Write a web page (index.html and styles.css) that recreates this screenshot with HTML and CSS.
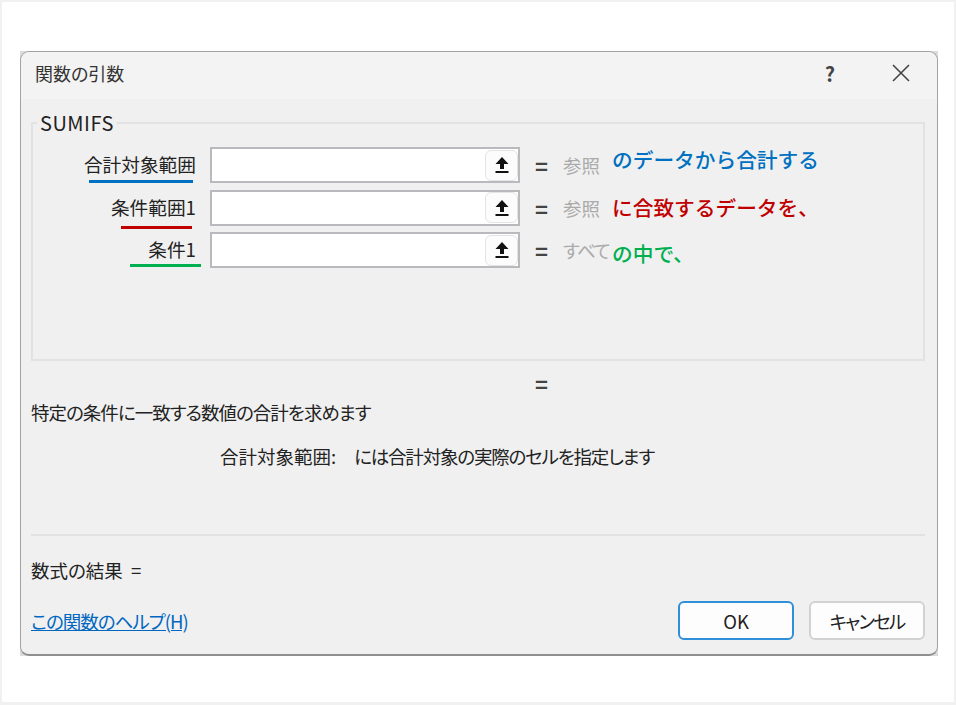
FILE: index.html
```html
<!DOCTYPE html>
<html lang="ja">
<head>
  <meta charset="UTF-8" />
  <title>関数の引数</title>
  <link rel="stylesheet" href="styles.css">
</head>
<body>
  <div class="page">
    <div class="dialog-back">
    <div class="dialog">
      <div class="titlebar">
        <div class="title">関数の引数</div>
        <div class="help">?</div>
        <svg class="close" width="18" height="18" viewBox="0 0 18 18"><path d="M1 1L17 17M17 1L1 17" /></svg>
      </div>
      <div class="content">
        <fieldset class="group">
          <legend>SUMIFS</legend>
          <div class="row">
            <div class="label">合計対象範囲</div>
            <div class="field">
              <div class="ref-btn"><svg width="16" height="18" viewBox="0 0 16 18"><path d="M8 1L14.5 8H10V13H6V8H1.5Z" /><rect x="1.5" y="15" width="13" height="2" /></svg></div>
              <span class="mark mark-blue"></span>
            </div>
            <div class="equals">=</div>
            <div class="hint">参照</div>
            <div class="note note-blue">のデータから合計する</div>
          </div>
          <div class="row">
            <div class="label">条件範囲1</div>
            <div class="field">
              <div class="ref-btn"><svg width="16" height="18" viewBox="0 0 16 18"><path d="M8 1L14.5 8H10V13H6V8H1.5Z" /><rect x="1.5" y="15" width="13" height="2" /></svg></div>
              <span class="mark mark-red"></span>
            </div>
            <div class="equals">=</div>
            <div class="hint">参照</div>
            <div class="note note-red">に合致するデータを、</div>
          </div>
          <div class="row">
            <div class="label">条件1</div>
            <div class="field">
              <div class="ref-btn"><svg width="16" height="18" viewBox="0 0 16 18"><path d="M8 1L14.5 8H10V13H6V8H1.5Z" /><rect x="1.5" y="15" width="13" height="2" /></svg></div>
              <span class="mark mark-green"></span>
            </div>
            <div class="equals">=</div>
            <div class="hint hint-all">すべて</div>
            <div class="note note-green">の中で、</div>
          </div>
        </fieldset>
        <div class="result-eq">=</div>
        <div class="desc">特定の条件に一致する数値の合計を求めます</div>
        <div class="arg-desc"><span class="arg-name">合計対象範囲:</span><span class="arg-text">には合計対象の実際のセルを指定します</span></div>
        <div class="divider"></div>
        <div class="formula">数式の結果&nbsp;&nbsp;=</div>
        <div class="footer">
          <a class="help-link" href="#">この関数のヘルプ(H)</a>
          <div class="buttons">
            <button class="btn btn-ok">OK</button>
            <button class="btn btn-cancel">キャンセル</button>
          </div>
        </div>
      </div>
    </div>
    </div>
  </div>
</body>
</html>
```

FILE: styles.css
```css
* {
  box-sizing: border-box;
  font-family: "Noto Sans CJK JP", "Noto Sans", sans-serif;
  font-feature-settings: "palt";
}
html, body {
  margin: 0;
  padding: 0;
  background: #fff;
}
.page {
  width: 956px;
  height: 705px;
  padding: 49px 16px 0 18px;
  border-left: 2px solid #f1f1f1;
  border-right: 2px solid #f1f1f1;
  border-top: 2px solid #f1f1f1;
  border-bottom: 3px solid #f1f1f1;
  overflow: hidden;
}
.dialog-back {
  width: 918px;
  height: 605px;
  background: #dcdcdc;
}
.dialog {
  height: 605px;
  background: #f0f0f0;
  border: 1px solid #a2a2a2;
  border-bottom: 2px solid #8f8f8f;
  border-radius: 9px;
  color: #222;
}
.titlebar {
  height: 47px;
  display: flex;
  align-items: center;
  padding: 0 27px 5px 14px;
  background: #f3f3f3;
  border-radius: 9px 9px 0 0;
}
.title {
  flex: 1;
  font-size: 18px;
  color: #333;
}
.help {
  font-size: 20px;
  font-weight: 700;
  color: #444;
  margin-right: 57px;
}
.close {
  stroke: #444;
  stroke-width: 1.6;
  fill: none;
}
.content {
  padding: 0 12px 0 10px;
}
.group {
  margin: 14px 0 0;
  padding: 14px 0 0;
  height: 248px;
  border: 2px solid #e2e2e2;
  min-width: 0;
}
.group legend {
  margin-left: 4px;
  padding: 0 3px;
  font-size: 20px;
  line-height: 20px;
  letter-spacing: 0.5px;
}
.row {
  display: flex;
  align-items: center;
  height: 36px;
  margin-bottom: 6.5px;
}
.label {
  width: 163px;
  margin-bottom: 3px;
  text-align: right;
  font-size: 18.7px;
  color: #222;
}
.field {
  position: relative;
  width: 310px;
  height: 36px;
  margin-left: 14px;
  background: #fff;
  border: 2px solid #b9b9be;
  display: flex;
  justify-content: flex-end;
  align-items: center;
}
.ref-btn {
  width: 33px;
  height: 31px;
  background: #fcfcfc;
  border: 1px solid #e4e4e4;
  border-radius: 6px;
  display: flex;
  align-items: center;
  justify-content: center;
}
.ref-btn svg {
  fill: #111;
}
.mark {
  position: absolute;
  height: 3px;
}
.mark-blue {
  left: -123px;
  width: 104px;
  top: 31px;
  background: #0070c0;
}
.mark-red {
  left: -91px;
  width: 71px;
  top: 34px;
  background: #c00000;
}
.mark-green {
  left: -82px;
  width: 71px;
  top: 30px;
  background: #00b050;
}
.equals {
  width: 43px;
  text-align: right;
  padding-right: 15px;
  font-size: 22px;
  line-height: 24px;
  font-weight: 700;
  color: #444;
}
.hint {
  width: 49px;
  font-size: 18.5px;
  color: #aaa;
  white-space: nowrap;
}
.hint-all {
  letter-spacing: -1.5px;
}
.note {
  font-size: 20.7px;
  font-weight: 500;
  white-space: nowrap;
  font-feature-settings: normal;
}
.note-blue { color: #0070c0; margin-top: -13px; }
.note-red { color: #c00000; margin-top: -1px; }
.note-green { color: #00b050; margin-top: 5px; }
.result-eq {
  width: 517px;
  margin-top: 10px;
  text-align: right;
  font-size: 22px;
  font-weight: 700;
  color: #444;
  line-height: 24px;
}
.desc {
  margin-top: 5px;
  font-size: 18.5px;
  line-height: 24px;
  letter-spacing: -1px;
}
.arg-desc {
  display: flex;
  gap: 18px;
  margin: 20px 0 0 189px;
  font-size: 18.5px;
  line-height: 24px;
}
.arg-text {
  letter-spacing: -1.2px;
}
.divider {
  margin-top: 66px;
  height: 2px;
  background: #e2e2e2;
}
.formula {
  margin-top: 22px;
  font-size: 18.5px;
  line-height: 24px;
}
.footer {
  display: flex;
  justify-content: space-between;
  align-items: center;
  margin-top: 19px;
}
.help-link {
  font-size: 18.5px;
  color: #0067c0;
  letter-spacing: -1px;
}
.buttons {
  display: flex;
  gap: 15px;
}
.btn {
  width: 116px;
  height: 39px;
  background: #fdfdfd;
  border: 2px solid #d2d2d2;
  border-radius: 6px;
  font-size: 18.5px;
  color: #222;
  padding: 0;
}
.btn-ok {
  border-color: #2f8fd8;
}
.btn-cancel {
  letter-spacing: -1.8px;
}
```
